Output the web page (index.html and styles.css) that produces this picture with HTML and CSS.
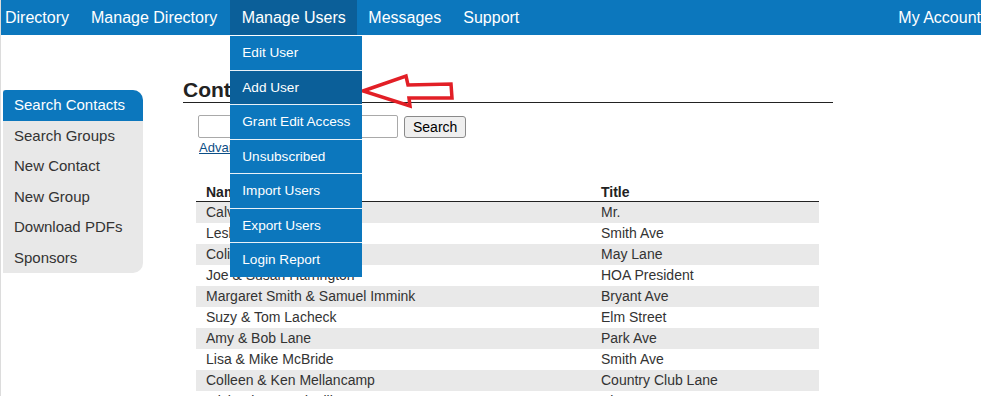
FILE: index.html
```html
<!DOCTYPE html>
<html>
<head>
<meta charset="utf-8">
<link rel="stylesheet" href="styles.css">
</head>
<body>
<nav class="topnav">
  <ul class="menu">
    <li class="menu-item first"><a href="#">Directory</a></li>
    <li class="menu-item"><a href="#">Manage Directory</a></li>
    <li class="menu-item active"><a href="#">Manage Users</a>
      <ul class="dropdown">
        <li><a href="#">Edit User</a></li>
        <li class="hover"><a href="#">Add User</a></li>
        <li><a href="#">Grant Edit Access</a></li>
        <li><a href="#">Unsubscribed</a></li>
        <li><a href="#">Import Users</a></li>
        <li><a href="#">Export Users</a></li>
        <li><a href="#">Login Report</a></li>
      </ul>
    </li>
    <li class="menu-item"><a href="#">Messages</a></li>
    <li class="menu-item"><a href="#">Support</a></li>
    <li class="menu-item account"><a href="#">My Account</a></li>
  </ul>
</nav>
<div class="page">
  <aside class="sidebar">
    <a class="side-link current" href="#">Search Contacts</a>
    <a class="side-link" href="#">Search Groups</a>
    <a class="side-link" href="#">New Contact</a>
    <a class="side-link" href="#">New Group</a>
    <a class="side-link" href="#">Download PDFs</a>
    <a class="side-link" href="#">Sponsors</a>
  </aside>
  <main class="content">
    <h2 class="title">Contacts</h2>
    <form class="search">
      <input class="search-input" type="text">
      <button class="search-btn" type="button">Search</button>
    </form>
    <a class="adv" href="#">Advanced Search</a>
    <table class="contacts">
      <thead>
        <tr><th class="col-name">Name</th><th>Title</th></tr>
      </thead>
      <tbody>
        <tr><td>Calvin &amp; Mary Adams</td><td>Mr.</td></tr>
        <tr><td>Leslie &amp; John Baker</td><td>Smith Ave</td></tr>
        <tr><td>Colin &amp; Jane Carter</td><td>May Lane</td></tr>
        <tr><td>Joe &amp; Susan Harrington</td><td>HOA President</td></tr>
        <tr><td>Margaret Smith &amp; Samuel Immink</td><td>Bryant Ave</td></tr>
        <tr><td>Suzy &amp; Tom Lacheck</td><td>Elm Street</td></tr>
        <tr><td>Amy &amp; Bob Lane</td><td>Park Ave</td></tr>
        <tr><td>Lisa &amp; Mike McBride</td><td>Smith Ave</td></tr>
        <tr><td>Colleen &amp; Ken Mellancamp</td><td>Country Club Lane</td></tr>
        <tr><td>Michaela &amp; Fred Miller</td><td>Elm Street</td></tr>
      </tbody>
    </table>
  </main>
</div>
<svg class="arrow" width="110" height="44" viewBox="0 0 110 44">
  <polygon points="7,21 50,6 52,15 95,14 96,28 53,28 54,36" fill="none" stroke="#e21f26" stroke-width="3.5" stroke-linejoin="miter"/>
</svg>
</body>
</html>
```

FILE: styles.css
```css
html, body {
  margin: 0;
  padding: 0;
  background: #ffffff;
  font-family: "Liberation Sans", Arial, sans-serif;
  color: #333333;
  overflow: hidden;
}

body {
  position: relative;
  min-height: 396px;
  border-left: 1px solid #dcdcdc;
  box-sizing: border-box;
}

.topnav {
  background: #0c77bd;
  height: 35px;
  margin-left: -1px;
}

.menu {
  list-style: none;
  margin: 0;
  padding: 0;
  display: flex;
  height: 35px;
}

.menu-item {
  position: relative;
}

.menu-item > a {
  display: block;
  padding: 0 11px;
  line-height: 35px;
  font-size: 16px;
  color: #ffffff;
  text-decoration: none;
}

.menu-item.first > a {
  padding-left: 5px;
}

.menu-item.active {
  margin-left: 2px;
}

.menu-item.active > a {
  background: #0b5f99;
  padding: 0 11.5px;
}

.menu-item.account {
  margin-left: auto;
  margin-right: -11px;
}

.dropdown {
  position: absolute;
  top: 36px;
  left: 0;
  width: 132px;
  list-style: none;
  margin: 0;
  padding: 0;
  z-index: 5;
}

.dropdown li {
  background: #0c77bd;
  border-top: 1px solid #e9f1f8;
}

.dropdown li:first-child {
  border-top: none;
}

.dropdown li.hover {
  background: #0b5f99;
}

.dropdown a {
  display: block;
  padding-left: 12px;
  line-height: 33.5px;
  font-size: 13.6px;
  color: #ffffff;
  text-decoration: none;
}

.page {
  display: flex;
  align-items: flex-start;
}

.sidebar {
  margin-top: 55px;
  margin-left: 2px;
  width: 140px;
  background: #e8e8e8;
  border-radius: 0 10px 10px 0;
  display: flex;
  flex-direction: column;
}

.side-link {
  display: block;
  height: 30.5px;
  line-height: 30.5px;
  padding-left: 11px;
  font-size: 15px;
  color: #333333;
  text-decoration: none;
}

.side-link.current {
  background: #0c77bd;
  color: #ffffff;
  border-radius: 3px 10px 0 0;
}

.content {
  margin-left: 40px;
  margin-top: 43px;
  width: 650px;
}

.title {
  margin: 0;
  font-size: 21px;
  line-height: 24px;
  font-weight: bold;
  color: #222222;
  border-bottom: 1px solid #222222;
}

.search {
  margin: 12px 0 0 15px;
  display: flex;
  align-items: center;
  gap: 6px;
}

.search-input {
  width: 200px;
  height: 23px;
  box-sizing: border-box;
  border: 1px solid #a9a9a9;
  border-radius: 2px;
  margin: 0;
}

.search-btn {
  height: 22px;
  padding: 0 8px;
  font-family: "Liberation Sans", Arial, sans-serif;
  font-size: 14px;
  color: #000000;
  background: #efefef;
  border: 1px solid #8a8a8a;
  border-radius: 3px;
}

.adv {
  display: inline-block;
  margin-left: 16px;
  font-size: 13px;
  line-height: 16px;
  color: #0b4e86;
}

.contacts {
  margin: 27px 0 0 13px;
  width: 623px;
  border-collapse: collapse;
  font-size: 14px;
}

.contacts th {
  text-align: left;
  font-weight: bold;
  color: #222222;
  height: 18px;
  padding: 0 10px;
  border-bottom: 1px solid #222222;
  vertical-align: middle;
}

.contacts th.col-name {
  width: 375px;
}

.contacts td {
  height: 21px;
  padding: 0 10px;
  line-height: 21px;
  color: #333333;
}

.contacts tbody tr:nth-child(odd) {
  background: #e9e9e9;
}

.arrow {
  position: absolute;
  left: 355px;
  top: 70px;
}
```
